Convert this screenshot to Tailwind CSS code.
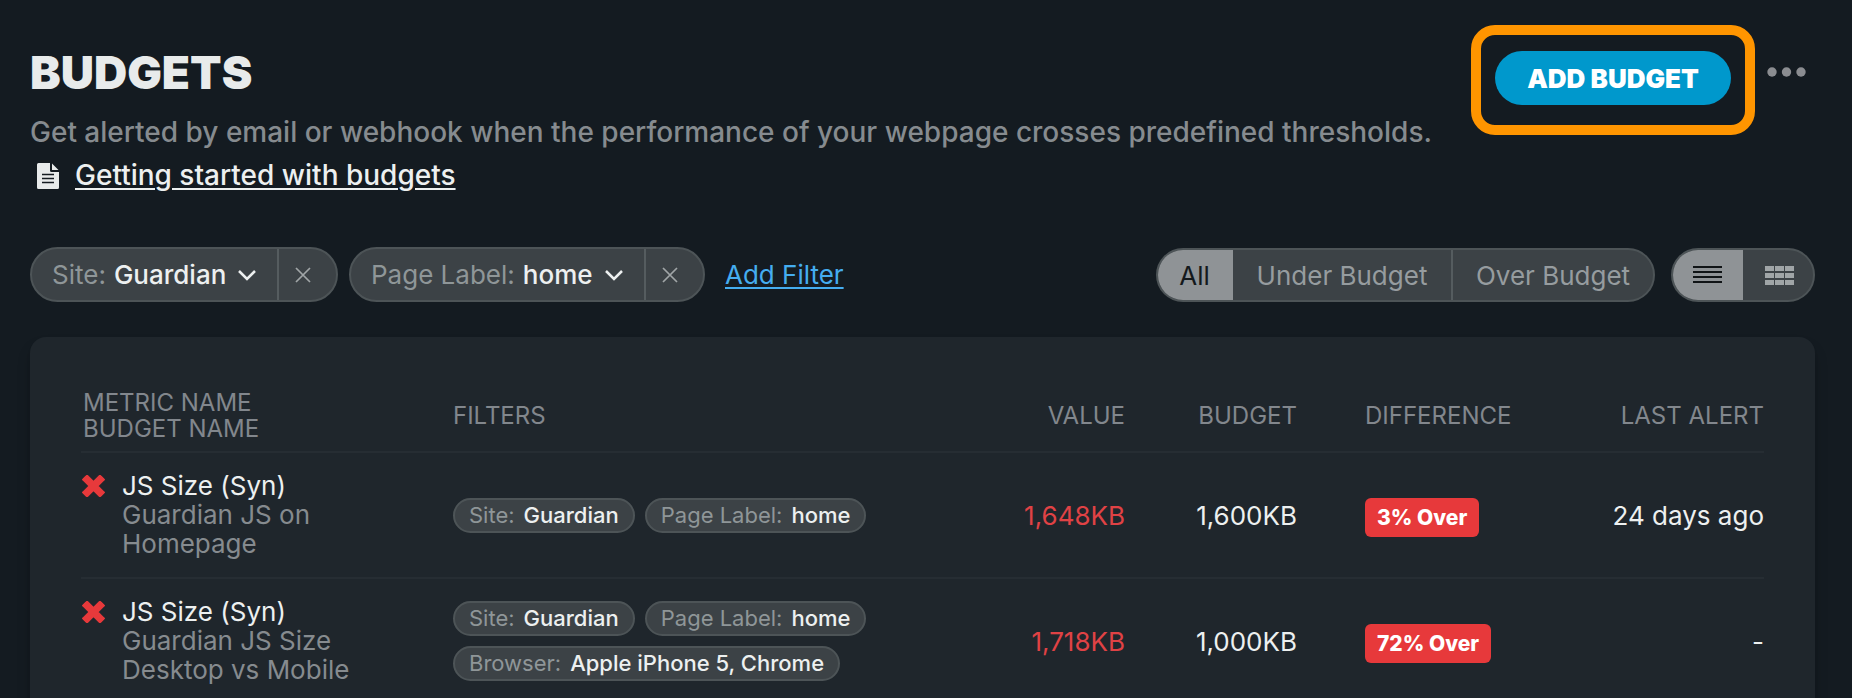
<!DOCTYPE html>
<html lang="en">
<head>
  <meta charset="UTF-8">
  <meta name="viewport" content="width=device-width, initial-scale=1.0">
  <title>Budgets</title>
  <script src="https://cdn.jsdelivr.net/npm/@tailwindcss/browser@4"></script>
</head>
<body class="min-h-screen bg-[#141b21] font-[Inter,sans-serif] text-[26px] text-[#edf0f0]">
  <div class="pl-[30px] pr-[37px] pt-[25px]">
    <header class="flex items-start justify-between">
      <div class="pt-5">
        <h1 class="text-[46px] leading-[54px] font-black text-[#e8ebeb]">BUDGETS</h1>
        <p class="mt-3 text-[28px] leading-[43px] font-medium text-[#868b8f]">Get alerted by email or webhook when the performance of your webpage crosses predefined thresholds.</p>
        <a href="#" class="flex items-center text-[28px] leading-[43px] font-medium">
          <svg class="ml-[7px] mr-4 w-[22px] h-[26px]" viewBox="0 0 22 26">
            <path fill="#e8ebeb" d="M1.500 0H13v7.500a1.500 1.500 0 0 0 1.500 1.500H22v15.500a1.500 1.500 0 0 1-1.500 1.500h-19A1.500 1.500 0 0 1 0 24.500v-23A1.500 1.500 0 0 1 1.500 0zM15 .5 21.500 7H15z"/>
            <path stroke="#141b21" stroke-width="1.500" d="M5 11.500h12M5 15.500h12M5 19.500h12"/>
          </svg>
          <span class="underline decoration-2 underline-offset-3">Getting started with budgets</span>
        </a>
      </div>
      <div class="flex shrink-0 items-start">
        <div class="rounded-3xl border-10 border-[#ff9500] px-[14px] pt-4 pb-5">
          <button class="h-[54px] w-[236px] rounded-full bg-[#0098cc] text-[26px] font-black text-white">ADD BUDGET</button>
        </div>
        <button class="mt-[42px] ml-3 mr-2" aria-label="More options">
          <svg class="w-10 h-[10px]" viewBox="0 0 40 10" fill="#8b8d91">
            <circle cx="5" cy="5" r="4.700"/><circle cx="19.500" cy="5" r="4.700"/><circle cx="34" cy="5" r="4.700"/>
          </svg>
        </button>
      </div>
    </header>

    <div class="mt-[50px] flex items-center justify-between">
      <div class="flex items-center">
        <div class="flex h-[55px] w-[308px] rounded-full border-2 border-[#4d5457] bg-[#3c4246]">
          <div class="relative flex flex-1 items-center pl-5">
            <label for="site" class="text-[#8f9698]">Site:</label>
            <select id="site" class="relative z-1 ml-2 appearance-none pr-7 font-medium"><option>Guardian</option></select>
            <svg class="absolute right-5 w-5 h-3" viewBox="0 0 20 12" fill="none" stroke="#edf0f0" stroke-width="2.500"><path d="m2 2 8 8 8-8"/></svg>
          </div>
          <button class="w-[59px] border-l-2 border-[#555c5f] pl-4" aria-label="Remove site filter">
            <svg class="w-4 h-4" viewBox="0 0 16 16" stroke="#a0a5a7" stroke-width="1.700"><path d="m1 1 14 14M15 1 1 15"/></svg>
          </button>
        </div>
        <div class="ml-[11px] flex h-[55px] w-[356px] rounded-full border-2 border-[#4d5457] bg-[#3c4246]">
          <div class="relative flex flex-1 items-center pl-5">
            <label for="label" class="text-[#8f9698]">Page Label:</label>
            <select id="label" class="relative z-1 ml-2 appearance-none pr-7 font-medium"><option>home</option></select>
            <svg class="absolute right-5 w-5 h-3" viewBox="0 0 20 12" fill="none" stroke="#edf0f0" stroke-width="2.500"><path d="m2 2 8 8 8-8"/></svg>
          </div>
          <button class="w-[59px] border-l-2 border-[#555c5f] pl-4" aria-label="Remove page label filter">
            <svg class="w-4 h-4" viewBox="0 0 16 16" stroke="#a0a5a7" stroke-width="1.700"><path d="m1 1 14 14M15 1 1 15"/></svg>
          </button>
        </div>
        <a href="#" class="ml-5 text-[#45adf0] underline decoration-2 underline-offset-3">Add Filter</a>
      </div>
      <div class="flex gap-4 pt-px">
        <div class="flex h-[54px] overflow-hidden rounded-full border-2 border-[#4d5457] bg-[#3c4246] text-[#969c9f]">
          <button class="-m-[2px] w-[77px] bg-[#8f9396] text-[#14191c]">All</button>
          <button class="ml-[2px] w-[218px]">Under Budget</button>
          <button class="w-[202px] border-l-2 border-[#555c5f]">Over Budget</button>
        </div>
        <div class="flex h-[54px] w-36 overflow-hidden rounded-full border-2 border-[#4d5457] bg-[#3c4246]">
          <button class="-m-[2px] flex w-[72px] items-center justify-center bg-[#8f9396]" aria-label="List view">
            <svg class="w-[30px] h-[18px]" viewBox="0 0 30 18" stroke="#101416" stroke-width="2"><path d="M1 1h29M1 6h29M1 11h29M1 16h29"/></svg>
          </button>
          <button class="flex flex-1 items-center justify-center pl-1" aria-label="Grid view">
            <svg class="w-[29px] h-[19px]" viewBox="0 0 29 19" fill="#a0a5a7">
              <path d="M0 0h9v5H0zM10 0h9v5h-9zM20 0h9v5h-9zM0 7h9v5H0zM10 7h9v5h-9zM20 7h9v5h-9zM0 14h9v5H0zM10 14h9v5h-9zM20 14h9v5h-9z"/>
            </svg>
          </button>
        </div>
      </div>
    </div>

    <main class="mt-[35px] rounded-t-2xl bg-[#1f262c] px-[51px] pt-11 shadow-lg shadow-black/30">
      <table class="w-full table-fixed">
        <thead>
          <tr class="border-b-2 border-[#262d33] text-2xl leading-[26px] text-[#82878d]">
            <th class="w-[372px] py-[9px] pl-0.5 text-left leading-[26px] font-normal">METRIC NAME<br>BUDGET NAME</th>
            <th class="text-left font-normal">FILTERS</th>
            <th class="w-[172px] text-right font-normal">VALUE</th>
            <th class="w-[172px] text-right font-normal">BUDGET</th>
            <th class="w-[262px] pl-[68px] text-left font-normal">DIFFERENCE</th>
            <th class="w-[205px] text-right font-normal">LAST ALERT</th>
          </tr>
        </thead>
        <tbody class="leading-[29px]">
          <tr class="border-b-2 border-[#262d33]">
            <td class="pt-[18px] pb-[19px]">
              <div class="flex">
                <svg class="mt-[4px] ml-px mr-[17px] w-[23px] h-[22px] shrink-0" viewBox="0 0 23 22" stroke="#e7393b" stroke-width="7.500" stroke-linecap="round"><path stroke-linecap="butt" d="m2.500 2 18 18M20.500 2l-18 18"/><path stroke-width="3" stroke-linejoin="round" d="m2 4.500 2.500-2.500M18.500 2 21 4.500M21 17.500 18.500 20M4.500 20 2 17.500"/></svg>
                <div>
                  <div>JS Size (Syn)</div>
                  <div class="w-[250px] text-[#868b8f]">Guardian JS on Homepage</div>
                </div>
              </div>
            </td>
            <td>
              <div class="flex flex-wrap gap-[10px] text-[22px] leading-[31px] font-medium">
                <span class="rounded-full border-2 border-[#4d5457] bg-[#3c4246] px-[14px]"><span class="mr-[9px] font-normal text-[#8f9698]">Site:</span>Guardian</span>
                <span class="rounded-full border-2 border-[#4d5457] bg-[#3c4246] px-[14px]"><span class="mr-[9px] font-normal text-[#8f9698]">Page Label:</span>home</span>
              </div>
            </td>
            <td class="text-right text-[#e04245]">1,648KB</td>
            <td class="text-right">1,600KB</td>
            <td class="pt-1 pl-[68px]"><span class="inline-block rounded-md bg-[#e7393b] px-3 align-middle text-[21px] leading-[39px] font-extrabold text-white">3% Over</span></td>
            <td class="text-right">24 days ago</td>
          </tr>
          <tr>
            <td class="pt-[18px] pb-[19px]">
              <div class="flex">
                <svg class="mt-[4px] ml-px mr-[17px] w-[23px] h-[22px] shrink-0" viewBox="0 0 23 22" stroke="#e7393b" stroke-width="7.500" stroke-linecap="round"><path stroke-linecap="butt" d="m2.500 2 18 18M20.500 2l-18 18"/><path stroke-width="3" stroke-linejoin="round" d="m2 4.500 2.500-2.500M18.500 2 21 4.500M21 17.500 18.500 20M4.500 20 2 17.500"/></svg>
                <div>
                  <div>JS Size (Syn)</div>
                  <div class="w-[250px] text-[#868b8f]">Guardian JS Size Desktop vs Mobile</div>
                </div>
              </div>
            </td>
            <td>
              <div class="flex flex-wrap gap-[10px] text-[22px] leading-[31px] font-medium">
                <span class="rounded-full border-2 border-[#4d5457] bg-[#3c4246] px-[14px]"><span class="mr-[9px] font-normal text-[#8f9698]">Site:</span>Guardian</span>
                <span class="rounded-full border-2 border-[#4d5457] bg-[#3c4246] px-[14px]"><span class="mr-[9px] font-normal text-[#8f9698]">Page Label:</span>home</span>
                <span class="rounded-full border-2 border-[#4d5457] bg-[#3c4246] px-[14px]"><span class="mr-[9px] font-normal text-[#8f9698]">Browser:</span>Apple iPhone 5, Chrome</span>
              </div>
            </td>
            <td class="text-right text-[#e04245]">1,718KB</td>
            <td class="text-right">1,000KB</td>
            <td class="pt-1 pl-[68px]"><span class="inline-block rounded-md bg-[#e7393b] px-3 align-middle text-[21px] leading-[39px] font-extrabold text-white">72% Over</span></td>
            <td class="text-right">-</td>
          </tr>
        </tbody>
      </table>
    </main>
  </div>
</body>
</html>
